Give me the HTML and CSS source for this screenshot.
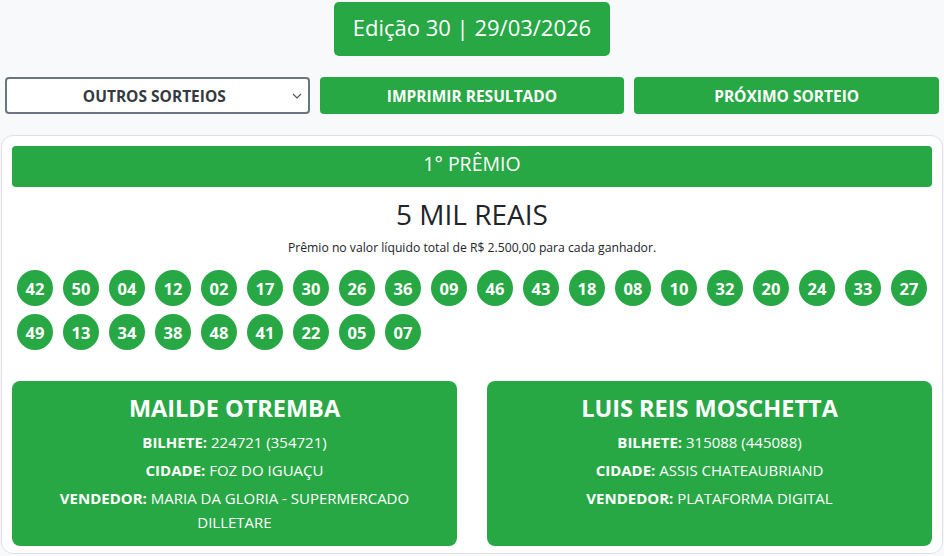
FILE: index.html
```html
<!DOCTYPE html>
<html lang="pt-BR">
<head>
<meta charset="utf-8">
<title>Resultado</title>
<link rel="stylesheet" href="styles.css">
</head>
<body>
<div class="top">
  <div class="edition">Edição 30 | 29/03/2026</div>
</div>
<div class="controls">
  <div class="select-wrap">
    <select class="select">
      <option>OUTROS SORTEIOS</option>
    </select>
    <svg class="chev" width="10" height="6" viewBox="0 0 10 6"><path d="M1 1 L5 5 L9 1" fill="none" stroke="#555" stroke-width="1.2"/></svg>
  </div>
  <button class="btn">IMPRIMIR RESULTADO</button>
  <button class="btn">PRÓXIMO SORTEIO</button>
</div>
<div class="card">
  <div class="bar">1° PRÊMIO</div>
  <div class="amount">5 MIL REAIS</div>
  <div class="sub">Prêmio no valor líquido total de R$ 2.500,00 para cada ganhador.</div>
  <div class="balls">
    <span class="ball">42</span><span class="ball">50</span><span class="ball">04</span><span class="ball">12</span><span class="ball">02</span><span class="ball">17</span><span class="ball">30</span><span class="ball">26</span><span class="ball">36</span><span class="ball">09</span><span class="ball">46</span><span class="ball">43</span><span class="ball">18</span><span class="ball">08</span><span class="ball">10</span><span class="ball">32</span><span class="ball">20</span><span class="ball">24</span><span class="ball">33</span><span class="ball">27</span><span class="ball">49</span><span class="ball">13</span><span class="ball">34</span><span class="ball">38</span><span class="ball">48</span><span class="ball">41</span><span class="ball">22</span><span class="ball">05</span><span class="ball">07</span>
  </div>
  <div class="winners">
    <div class="winner">
      <h2 class="name">MAILDE OTREMBA</h2>
      <p class="line"><b>BILHETE:</b> 224721 (354721)</p>
      <p class="line"><b>CIDADE:</b> FOZ DO IGUAÇU</p>
      <p class="line"><b>VENDEDOR:</b> MARIA DA GLORIA - SUPERMERCADO DILLETARE</p>
    </div>
    <div class="winner">
      <h2 class="name">LUIS REIS MOSCHETTA</h2>
      <p class="line"><b>BILHETE:</b> 315088 (445088)</p>
      <p class="line"><b>CIDADE:</b> ASSIS CHATEAUBRIAND</p>
      <p class="line"><b>VENDEDOR:</b> PLATAFORMA DIGITAL</p>
    </div>
  </div>
</div>
</body>
</html>
```
FILE: styles.css
```css
* { box-sizing: border-box; }
body {
  margin: 0;
  background: #f8f9fa;
  font-family: "Open Sans", "Noto Sans", "Liberation Sans", sans-serif;
  color: #212529;
}
.top {
  text-align: center;
  padding-top: 2px;
}
.edition {
  display: inline-block;
  background: #28a745;
  color: #fff;
  font-size: 22px;
  font-weight: 400;
  line-height: 34px;
  padding: 8px 19px 12px;
  border-radius: 5px;
}
.controls {
  display: grid;
  grid-template-columns: 1fr 1fr 1fr;
  gap: 10px;
  padding: 0 5px;
  margin-top: 21px;
}
.select-wrap {
  position: relative;
  display: flex;
}
.select {
  flex: 1;
  height: 37px;
  border: 2px solid #6c757d;
  border-radius: 4px;
  background: #fff;
  color: #343a40;
  font-family: inherit;
  font-size: 15.5px;
  font-weight: 700;
  text-align: center;
  text-align-last: center;
  appearance: none;
  -webkit-appearance: none;
  padding: 0 16px 0 10px;
}
.chev {
  position: absolute;
  right: 8px;
  top: 16px;
  pointer-events: none;
}
.btn {
  height: 37px;
  border: none;
  border-radius: 4px;
  background: #28a745;
  color: #fff;
  font-family: inherit;
  font-size: 15.5px;
  font-weight: 700;
}
.card {
  margin: 21px 1px 0;
  background: #fff;
  border: 1px solid #dee2e6;
  border-radius: 12px;
  padding: 10px 10px 7px;
}
.bar {
  background: #28a745;
  color: #fff;
  text-align: center;
  font-size: 19.5px;
  height: 41px;
  line-height: 36px;
  border-radius: 4px;
}
.amount {
  text-align: center;
  font-size: 28px;
  line-height: 34px;
  margin-top: 10px;
}
.sub {
  text-align: center;
  font-size: 12.2px;
  line-height: 20px;
  margin-top: 7px;
}
.balls {
  display: flex;
  flex-wrap: wrap;
  margin-top: 8px;
}
.ball {
  width: 36px;
  height: 36px;
  margin: 4px 5px;
  border-radius: 50%;
  background: #28a745;
  color: #fff;
  font-weight: 700;
  font-size: 16.5px;
  display: flex;
  align-items: center;
  justify-content: center;
}
.winners {
  display: grid;
  grid-template-columns: 1fr 1fr;
  gap: 30px;
  margin-top: 27px;
}
.winner {
  background: #28a745;
  color: #fff;
  border-radius: 8px;
  padding: 13px 16px 8px;
  text-align: center;
}
.name {
  margin: 0 0 7px;
  font-size: 23.5px;
  line-height: 29px;
  font-weight: 700;
}
.line {
  margin: 0 0 4px;
  font-size: 15px;
  line-height: 24px;
}
```
